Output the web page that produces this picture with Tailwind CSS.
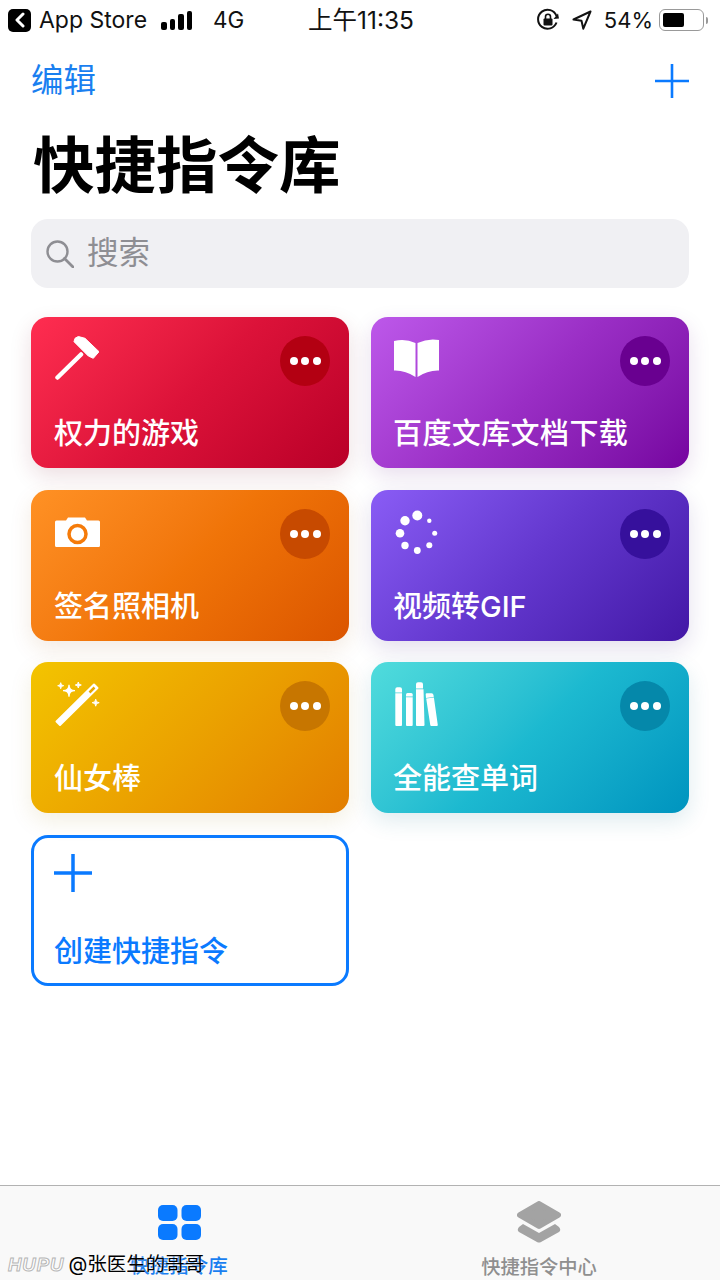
<!DOCTYPE html>
<html lang="zh-CN">
<head>
    <meta charset="UTF-8">
    <meta name="viewport" content="width=device-width, initial-scale=1.0">
    <title>快捷指令库</title>
    <script src="https://cdn.jsdelivr.net/npm/@tailwindcss/browser@4"></script>
</head>
<body class="bg-white font-['Inter','Noto_Sans_CJK_SC',sans-serif]">
<div class="relative w-[720px] h-[1280px] overflow-hidden flex flex-col bg-white">

    <!-- status bar -->
    <div class="h-[40px] shrink-0 grid grid-cols-[1fr_auto_1fr] items-center text-[24px] leading-[40px] text-[#111]">
        <div class="flex items-center pl-[8px]">
            <div class="w-[23px] h-[23px] rounded-[5px] bg-black flex items-center justify-center">
                <svg width="12" height="16" viewBox="0 0 12 16"><path d="M9 2 3 8l6 6" fill="none" stroke="#fff" stroke-width="3" stroke-linecap="round" stroke-linejoin="round"/></svg>
            </div>
            <span class="ml-[8px] text-[23px]">App Store</span>
            <div class="ml-[14px] flex items-end gap-[3px] h-[19px]">
                <div class="w-[5.500px] h-[8px] rounded-[2px] bg-black"></div>
                <div class="w-[5.500px] h-[11px] rounded-[2px] bg-black"></div>
                <div class="w-[5.500px] h-[16px] rounded-[2px] bg-black"></div>
                <div class="w-[5.500px] h-[19px] rounded-[2px] bg-black"></div>
            </div>
            <span class="ml-[21px] text-[22.5px]">4G</span>
        </div>
        <div class="text-[24.5px] translate-x-[1px]">上午11:35</div>
        <div class="flex items-center justify-end pr-[12px]">
            <svg width="24" height="24" viewBox="0 0 24 24">
                <path d="M20.5 14.5A9.5 9.5 0 1 1 20.5 8" fill="none" stroke="#111" stroke-width="2"/>
                <path d="m17.5 9 5.5-.5-1-5z" fill="#111" transform="translate(0 2)"/>
                <rect x="7.5" y="10.5" width="9" height="7" rx="1" fill="#111"/>
                <path d="M9.5 11V8.8a2.5 2.5 0 0 1 5 0V11" fill="none" stroke="#111" stroke-width="1.6"/>
            </svg>
            <svg class="ml-[12px]" width="20" height="20" viewBox="0 0 20 20"><path d="M18.5 1.5 1.5 9.5l8 1.200 1.800 8z" fill="none" stroke="#111" stroke-width="2" stroke-linejoin="round"/></svg>
            <span class="ml-[12px] text-[22px]">54%</span>
            <div class="ml-[6px] w-[45px] h-[22px] rounded-[6px] border-[1.5px] border-[#999] p-[3px]">
                <div class="w-[21px] h-full rounded-[2px] bg-black"></div>
            </div>
            <div class="ml-[2px] w-[2px] h-[7px] rounded-r-full bg-[#999]"></div>
        </div>
    </div>

    <!-- nav -->
    <div class="h-[82px] shrink-0 flex items-center justify-between pl-[31px] pr-[31px]">
        <span class="text-[32.5px] text-[#1a7ff0]">编辑</span>
        <svg width="34" height="34" viewBox="0 0 34 34"><path d="M17 0v34M0 17h34" stroke="#0a7aff" stroke-width="2.600"/></svg>
    </div>

    <h1 class="h-[97px] shrink-0 pl-[33px] text-[61.5px] leading-[87px] font-bold text-black">快捷指令库</h1>

    <!-- search -->
    <div class="mx-[31px] h-[69px] shrink-0 rounded-[17px] bg-[#f0f0f3] flex items-center pl-[15px]">
        <svg width="28" height="28" viewBox="0 0 28 28"><circle cx="11.5" cy="11.5" r="10" fill="none" stroke="#8e8e93" stroke-width="2.400"/><path d="m18.5 18.5 9 9" stroke="#8e8e93" stroke-width="2.800" stroke-linecap="round"/></svg>
        <span class="ml-[13px] text-[31.5px] leading-[44px] pb-[2px] text-[#8e8e93]">搜索</span>
    </div>

    <!-- shortcuts -->
    <div class="flex-1 mx-[31px] mt-[29px] grid grid-cols-[318px_318px] justify-between gap-y-[21.6px] content-start">

        <div class="h-[151px] rounded-[17px] bg-linear-135 from-[#ff2d50] via-[#dc1239] to-[#b90028] shadow-[0_8px_22px_rgba(120,20,40,0.14)] pl-[23px] pr-[19px] pt-[19px] flex flex-col justify-between pb-[15px]">
            <div class="flex justify-between items-start">
                <svg class="ml-[1px]" width="44" height="44" viewBox="0 0 44 44" fill="#fff"><path d="M2.500 41.500 26 18.500" stroke="#fff" stroke-width="4.500" stroke-linecap="round"/><path d="M20 2.300 23.300 .5 30 2.300 44 15.700 38.300 22.300 33.300 20 19 5.700z" stroke="#fff" stroke-linejoin="round"/></svg>
                <div class="w-[50px] h-[50px] rounded-full bg-[#b30012] flex items-center justify-center gap-[3.5px]"><div class="w-[8px] h-[8px] rounded-full bg-white"></div><div class="w-[8px] h-[8px] rounded-full bg-white"></div><div class="w-[8px] h-[8px] rounded-full bg-white"></div></div>
            </div>
            <div class="text-[29px] leading-[38px] font-medium text-white">权力的游戏</div>
        </div>

        <div class="h-[151px] rounded-[17px] bg-linear-135 from-[#bd58ea] via-[#9a2ec5] to-[#7603a0] shadow-[0_8px_22px_rgba(90,20,130,0.14)] pl-[22px] pr-[19px] pt-[19px] flex flex-col justify-between pb-[15px]">
            <div class="flex justify-between items-start">
                <svg class="ml-[1px]" width="45" height="44" viewBox="0 0 45 44" fill="#fff"><path d="M0 5Q11 2 21.500 7V41Q11 34 0 34.500z"/><path d="M23.500 7Q34 2 45 4V34.500Q34 34 23.500 41z"/></svg>
                <div class="w-[50px] h-[50px] rounded-full bg-[#690090] flex items-center justify-center gap-[3.5px]"><div class="w-[8px] h-[8px] rounded-full bg-white"></div><div class="w-[8px] h-[8px] rounded-full bg-white"></div><div class="w-[8px] h-[8px] rounded-full bg-white"></div></div>
            </div>
            <div class="text-[29px] leading-[38px] tracking-[0.4px] font-medium text-white">百度文库文档下载</div>
        </div>

        <div class="h-[151px] rounded-[17px] bg-linear-135 from-[#ff9124] via-[#f07408] to-[#db5500] shadow-[0_8px_22px_rgba(160,80,20,0.12)] pl-[23px] pr-[19px] pt-[19px] flex flex-col justify-between pb-[15px]">
            <div class="flex justify-between items-start">
                <svg class="ml-[1px]" width="45" height="44" viewBox="0 0 45 44" fill="#fff"><path d="M1.500 11.500H11L13 8.500H30L32 11.500H43.500A1.500 1.500 0 0 1 45 13V36.500A1.500 1.500 0 0 1 43.500 38H1.500A1.500 1.500 0 0 1 0 36.500V13A1.500 1.500 0 0 1 1.500 11.500z"/><circle cx="22.500" cy="25" r="8.500" fill="#fff" stroke="#f57b0a" stroke-width="3.500"/></svg>
                <div class="w-[50px] h-[50px] rounded-full bg-[#c74a00] flex items-center justify-center gap-[3.5px]"><div class="w-[8px] h-[8px] rounded-full bg-white"></div><div class="w-[8px] h-[8px] rounded-full bg-white"></div><div class="w-[8px] h-[8px] rounded-full bg-white"></div></div>
            </div>
            <div class="text-[29px] leading-[38px] font-medium text-white">签名照相机</div>
        </div>

        <div class="h-[151px] rounded-[17px] bg-linear-135 from-[#8a5cf5] via-[#6337ce] to-[#4317a6] shadow-[0_8px_22px_rgba(60,30,130,0.14)] pl-[22px] pr-[19px] pt-[19px] flex flex-col justify-between pb-[15px]">
            <div class="flex justify-between items-start">
                <svg class="ml-[1px]" width="45" height="46" viewBox="0 0 45 46" fill="#fff"><circle cx="23.300" cy="6.500" r="5"/><circle cx="11" cy="11.800" r="4.700"/><circle cx="6" cy="24.200" r="4.300"/><circle cx="11" cy="36.500" r="3.700"/><circle cx="23.300" cy="41.500" r="3.400"/><circle cx="35.300" cy="36.200" r="3"/><circle cx="40.700" cy="24.200" r="2.500"/><circle cx="35.300" cy="11.800" r="2.200"/></svg>
                <div class="w-[50px] h-[50px] rounded-full bg-[#36109c] flex items-center justify-center gap-[3.5px]"><div class="w-[8px] h-[8px] rounded-full bg-white"></div><div class="w-[8px] h-[8px] rounded-full bg-white"></div><div class="w-[8px] h-[8px] rounded-full bg-white"></div></div>
            </div>
            <div class="text-[29px] leading-[38px] font-medium text-white">视频转GIF</div>
        </div>

        <div class="h-[151px] rounded-[17px] bg-linear-135 from-[#f3c400] via-[#eba200] to-[#e27d00] shadow-[0_8px_22px_rgba(160,120,20,0.12)] pl-[23px] pr-[19px] pt-[19px] flex flex-col justify-between pb-[15px]">
            <div class="flex justify-between items-start">
                <svg class="ml-[1px]" width="45" height="46" viewBox="0 0 45 46" fill="#fff">
                    <path d="M1.500 40.500 5 44 42.500 7 39 3.500z" stroke="#fff" stroke-width="2" stroke-linejoin="round"/>
                    <path d="M34.500 11.500 39.500 6.500" stroke="#eaa800" stroke-width="2.500"/>
                    <path d="M14 3.700Q14 9.700 20 9.700Q14 9.700 14 15.700Q14 9.700 8 9.700Q14 9.700 14 3.700z" stroke="#fff" stroke-width="1.200"/>
                    <path d="M5.700 1.700Q5.700 4.700 8.700 4.700Q5.700 4.700 5.700 7.700Q5.700 4.700 2.700 4.700Q5.700 4.700 5.700 1.700z" stroke="#fff"/>
                    <path d="M23.300 1Q23.300 4 26.300 4Q23.300 4 23.300 7Q23.300 4 20.300 4Q23.300 4 23.300 1z" stroke="#fff"/>
                    <path d="M40.700 18.200Q40.700 21.700 44.200 21.700Q40.700 21.700 40.700 25.200Q40.700 21.700 37.200 21.700Q40.700 21.700 40.700 18.200z" stroke="#fff"/>
                </svg>
                <div class="w-[50px] h-[50px] rounded-full bg-[#c77600] flex items-center justify-center gap-[3.5px]"><div class="w-[8px] h-[8px] rounded-full bg-white"></div><div class="w-[8px] h-[8px] rounded-full bg-white"></div><div class="w-[8px] h-[8px] rounded-full bg-white"></div></div>
            </div>
            <div class="text-[29px] leading-[38px] font-medium text-white">仙女棒</div>
        </div>

        <div class="h-[151px] rounded-[17px] bg-linear-135 from-[#50dcdc] via-[#1cb9d0] to-[#0094bf] shadow-[0_8px_22px_rgba(20,110,140,0.14)] pl-[22px] pr-[19px] pt-[19px] flex flex-col justify-between pb-[15px]">
            <div class="flex justify-between items-start">
                <svg class="ml-[1px]" width="45" height="46" viewBox="0 0 45 46" fill="#fff">
                    <path d="M1.300 8.300a2 2 0 0 1 2-2H6a2 2 0 0 1 2 2V11.500H1.300z"/><path d="M1.300 12.300H8V44a1 1 0 0 1-1 1H2.300a1 1 0 0 1-1-1z"/>
                    <path d="M12 13.500a1.500 1.500 0 0 1 1.500-1.500h3.700a1.500 1.500 0 0 1 1.500 1.500V15.500H12z"/><path d="M12 16.300h6.700V44a1 1 0 0 1-1 1H13a1 1 0 0 1-1-1z"/>
                    <path d="M22 3.300a2 2 0 0 1 2-2h3a2 2 0 0 1 2 2V7.500h-7z"/><path d="M22 8.300h7.500L30.500 44a1 1 0 0 1-1 1H23a1 1 0 0 1-1-1z"/>
                    <path d="M31.700 13.300a1 1 0 0 1 1-1H37.500a2 2 0 0 1 2 1.700l.2 2-7.700 1z"/><path d="M32.200 17.500 39.900 16.500 43.800 44a1 1 0 0 1-1 1H37.300a1 1 0 0 1-1-.8z"/>
                </svg>
                <div class="w-[50px] h-[50px] rounded-full bg-[#0588aa] flex items-center justify-center gap-[3.5px]"><div class="w-[8px] h-[8px] rounded-full bg-white"></div><div class="w-[8px] h-[8px] rounded-full bg-white"></div><div class="w-[8px] h-[8px] rounded-full bg-white"></div></div>
            </div>
            <div class="text-[29px] leading-[38px] font-medium text-white">全能查单词</div>
        </div>

        <div class="h-[151px] rounded-[17px] border-[3px] border-[#0a7aff] pl-[20px] pr-[19px] pt-[16px] flex flex-col justify-between pb-[12px]">
            <svg width="38" height="38" viewBox="0 0 38 38"><path d="M19 0v38M0 19h38" stroke="#0a7aff" stroke-width="3.500"/></svg>
            <div class="text-[29px] leading-[38px] font-medium text-[#0a7aff]">创建快捷指令</div>
        </div>
    </div>

    <!-- tab bar -->
    <div class="h-[95px] shrink-0 border-t border-[#b2b2b2] bg-[#f9f9f9] flex">
        <div class="w-[358px] flex flex-col items-center pt-[19px]">
            <svg width="43" height="35" viewBox="0 0 43 35" fill="#0a7aff"><rect width="19.500" height="16" rx="5"/><rect x="23.500" width="19.500" height="16" rx="5"/><rect y="19" width="19.500" height="16" rx="5"/><rect x="23.500" y="19" width="19.500" height="16" rx="5"/></svg>
            <span class="mt-[13px] text-[19.500px] leading-[26px] font-medium text-[#1a7ff0]">快捷指令库</span>
        </div>
        <div class="flex-1 flex flex-col items-center pt-[15px]">
            <svg width="44" height="43" viewBox="0 0 44 43" fill="#a3a3a3"><path d="M22 3 41 14 22 25 3 14z" stroke="#a3a3a3" stroke-width="6" stroke-linejoin="round"/><path d="M6 23 22 32 38 23 42 26Q44.500 29 42 31L24 41Q22 42 20 41L2 31Q-.5 29 2 26z"/></svg>
            <span class="mt-[10px] text-[19.300px] leading-[26px] font-medium text-[#8f8f8f]">快捷指令中心</span>
        </div>
    </div>

    <!-- watermark over the tab bar -->
    <div class="absolute left-[8px] top-[1250px] flex items-center gap-[4px]">
        <span class="font-['Liberation_Sans',sans-serif] italic font-bold text-[18.5px] tracking-[1px] text-white [-webkit-text-stroke:1px_#b5b5b5]">HUPU</span>
        <span class="text-[19.5px] text-black [text-shadow:0_0_2px_#fff]">@张医生的哥哥</span>
    </div>
</div>
</body>
</html>
